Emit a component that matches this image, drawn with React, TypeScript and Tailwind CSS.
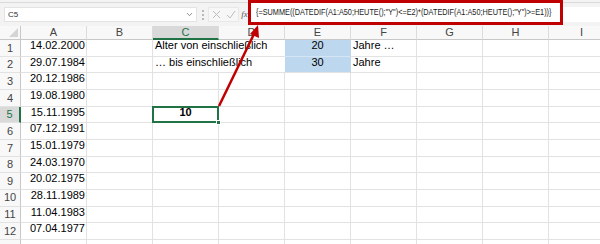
import { ChevronDown } from 'lucide-react'

const DATES = [
  '14.02.2000', '29.07.1984', '20.12.1986', '19.08.1980', '15.11.1995', '07.12.1991',
  '15.01.1979', '24.03.1970', '20.02.1975', '28.11.1989', '11.04.1983', '07.04.1977', '',
]
const COLS = ['A', 'B', 'C', 'D', 'E', 'F', 'G', 'H', 'I']
const FORMULA = '{=SUMME((DATEDIF(A1:A50;HEUTE();"Y")<=E2)*(DATEDIF(A1:A50;HEUTE();"Y")>=E1))}'

const cell = 'h-[16.67px] border-r border-b border-[#e2e2e2] flex items-end pb-[2px] whitespace-nowrap text-[11px] text-black'

function Row({ n, date }: { n: number; date: string }) {
  const active = n === 5
  return (
    <>
      <div
        className={
          'h-[16.67px] border-b border-[#e2e2e2] flex items-center justify-center text-[11px] ' +
          (active
            ? 'bg-[#d9d9d9] text-[#217346] border-r-2 border-r-[#217346]'
            : 'bg-[#f8f8f8] text-[#444] border-r border-r-[#c8c8c8]')
        }
      >
        {n <= 12 ? n : ''}
      </div>
      <div className={cell + ' justify-end pr-[1px]'}>{date}</div>
      <div className={cell} />
      {n === 1 || n === 2 ? (
        <div className={cell + ' col-span-2 pl-[2px] border-r-0'}>
          {n === 1 ? 'Alter von einschließlich' : '… bis einschließlich'}
        </div>
      ) : n === 5 ? (
        <>
          <div className={cell + ' relative justify-center font-bold'}>
            10
            <div className="absolute -left-px -top-px -right-px -bottom-px border-2 border-[#217346]" />
            <div className="absolute -right-[3px] -bottom-[3px] w-[5px] h-[5px] bg-[#217346] border border-white" />
          </div>
          <div className={cell} />
        </>
      ) : (
        <>
          <div className={cell} />
          <div className={cell} />
        </>
      )}
      {n === 1 || n === 2 ? (
        <div className={cell + ' justify-center bg-[#bdd7ee] border-r-[#bdd7ee] ' + (n === 1 ? 'border-b-[#d6e5f3]' : 'border-b-[#e2e2e2]')}>
          {n === 1 ? '20' : '30'}
        </div>
      ) : (
        <div className={cell} />
      )}
      <div className={cell + ' pl-[2px]'}>{n === 1 ? 'Jahre …' : n === 2 ? 'Jahre' : ''}</div>
      <div className={cell} />
      <div className={cell} />
      <div className={cell} />
    </>
  )
}

export default function App() {
  return (
    <div className="relative w-[600px] h-[244px] overflow-hidden bg-white font-['Liberation_Sans',Arial,sans-serif]">
      {/* leftover of the ribbon */}
      <div className="h-[3px] bg-[#f3f3f3] border-b border-[#dadada]" />

      {/* formula bar */}
      <div className="h-[23px] bg-[#f3f3f3] flex items-center">
        <div className="ml-[4px] w-[193px] h-[15px] bg-white border border-[#e3e3e3] flex items-center justify-between pl-[3px] pr-[2px]">
          <span className="text-[8px] text-[#333]">C5</span>
          <ChevronDown size={9} strokeWidth={2} className="text-[#666]" />
        </div>
        <div className="w-[11px] flex flex-col items-center gap-[2px]">
          <span className="w-[2px] h-[2px] rounded-full bg-[#a6a6a6]" />
          <span className="w-[2px] h-[2px] rounded-full bg-[#a6a6a6]" />
          <span className="w-[2px] h-[2px] rounded-full bg-[#a6a6a6]" />
        </div>
        <div className="w-[31px] h-[15px] flex items-center justify-around bg-[#f7f7f7] border border-[#e8e8e8]">
          <svg width="9" height="9" viewBox="0 0 9 9" className="text-[#bdbdbd]">
            <path d="M1 1 L8 8 M8 1 L1 8" stroke="currentColor" strokeWidth="1" fill="none" />
          </svg>
          <svg width="10" height="9" viewBox="0 0 10 9" className="text-[#bdbdbd]">
            <path d="M1 5 L4 8 L9 1" stroke="currentColor" strokeWidth="1" fill="none" />
          </svg>
        </div>
        <span className="w-[11px] text-center text-[9px] italic font-['Liberation_Serif',serif] text-[#555]">fx</span>
        <div className="flex-1 h-[15px] bg-white" />
      </div>

      {/* annotated formula box */}
      <div className="absolute left-[248px] top-0 w-[315px] h-[25px] bg-white border-[3px] border-[#c00000] flex items-center pl-[5px]">
        <span className="inline-block origin-left scale-x-[0.86] text-[8.5px] text-[#1a1a1a] whitespace-nowrap">{FORMULA}</span>
      </div>

      {/* grid */}
      <div className="grid grid-cols-[21px_repeat(9,66px)]">
        <div className="h-[14px] bg-[#f8f8f8] border-r border-b border-[#c8c8c8] relative">
          <div className="absolute right-[2px] bottom-[2px] w-0 h-0 border-l-[9px] border-l-transparent border-b-[9px] border-b-[#d4d4d4]" />
        </div>
        {COLS.map(c => (
          <div
            key={c}
            className={
              'h-[14px] flex items-center justify-center text-[11px] border-r border-r-[#dcdcdc] ' +
              (c === 'C'
                ? 'bg-[#d9d9d9] text-[#217346] border-b-2 border-b-[#217346]'
                : 'bg-[#f8f8f8] text-[#444] border-b border-b-[#c8c8c8]')
            }
          >
            {c}
          </div>
        ))}
        {DATES.map((d, i) => (
          <Row key={i} n={i + 1} date={d} />
        ))}
      </div>

      {/* red arrow */}
      <svg className="absolute left-0 top-0 pointer-events-none" width="600" height="244">
        <line x1="219" y1="106" x2="254" y2="34" stroke="#c00000" strokeWidth="2.5" />
        <polygon points="258,25 250,34 259,38" fill="#c00000" />
      </svg>
    </div>
  )
}
